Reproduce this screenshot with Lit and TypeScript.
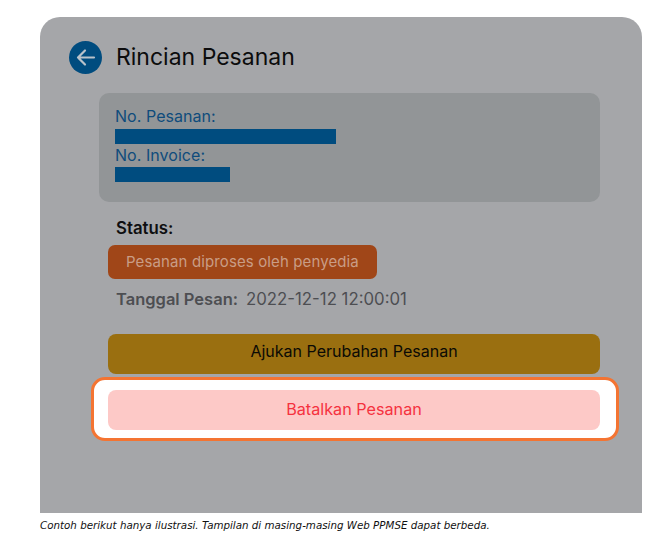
import { LitElement, html, css } from 'lit';
import { customElement } from 'lit/decorators.js';

@customElement('app-root')
export class AppRoot extends LitElement {
  static styles = css`
    :host {
      display: block;
      width: 662px;
      height: 537px;
      background: #fff;
      font-family: 'Inter', 'Liberation Sans', sans-serif;
      overflow: hidden;
    }

    .page {
      display: flex;
      flex-direction: column;
      margin: 0;
      padding: 17px 20px 0 40px;
    }

    .screen {
      display: flex;
      flex-direction: column;
      height: 496px;
      background: #a5a6a9;
      border-radius: 20px 20px 0 0;
    }

    header {
      display: flex;
      align-items: center;
      gap: 14px;
      height: 34px;
      margin-top: 23px;
      padding-left: 29px;
    }

    header svg {
      display: block;
      flex: none;
    }

    h1 {
      margin: 0;
      font-size: 23px;
      font-weight: 400;
      line-height: 28px;
      color: #0c0c0d;
    }

    .order-card {
      display: flex;
      flex-direction: column;
      box-sizing: border-box;
      width: 501px;
      height: 109px;
      margin: 19px 0 0 59px;
      padding: 13px 16px 0;
      background: #929597;
      border-radius: 10px;
    }

    .label {
      font-size: 16px;
      line-height: 20px;
      letter-spacing: 0.05px;
      color: #0f4c7c;
    }

    .bar {
      height: 15px;
      background: #004c7f;
    }

    .bar.order {
      width: 221px;
      margin: 3px 0 1px;
    }

    .bar.invoice {
      width: 115px;
      margin-top: 2px;
    }

    .details {
      display: flex;
      flex-direction: column;
      align-items: flex-start;
      padding-left: 68px;
    }

    .status-title {
      margin: 16px 0 0 8px;
      font-size: 16.8px;
      font-weight: 600;
      line-height: 20px;
      color: #0e0e10;
    }

    .status-pill {
      box-sizing: border-box;
      width: 269px;
      height: 34px;
      margin-top: 7px;
      padding-left: 18px;
      background: #a04618;
      border-radius: 7px;
      font-size: 15px;
      letter-spacing: 0.12px;
      line-height: 33px;
      color: #c99d86;
    }

    .order-date {
      display: flex;
      gap: 8px;
      margin: 10px 0 0 8px;
      font-size: 16.8px;
      line-height: 20px;
      color: #4d4e52;
    }

    .order-date b {
      font-size: 16.5px;
      font-weight: 600;
    }

    .action {
      box-sizing: border-box;
      width: 492px;
      height: 40px;
      border-radius: 8px;
      font-size: 16px;
      line-height: 35px;
      text-align: center;
    }

    .action.change {
      margin: 25px 0 3px;
      background: #9a6f10;
      color: #0b0a05;
    }

    .highlight {
      box-sizing: border-box;
      width: 528px;
      height: 64px;
      margin-left: 51px;
      padding: 10px 16px 8px 14px;
      background: #fff;
      border: 3px solid #f47432;
      border-radius: 14px;
    }

    .action.cancel {
      background: #fdc9c7;
      color: #f5323f;
      font-size: 16.2px;
      line-height: 38px;
    }

    figcaption {
      margin-top: 5px;
      font-family: 'DejaVu Sans', sans-serif;
      font-size: 10.3px;
      font-style: italic;
      line-height: 14px;
      color: #111;
    }
  `;

  render() {
    return html`<figure class="page">
      <div class="screen">
        ${this.renderHeader()}
        <section class="order-card">
          <span class="label">No. Pesanan:</span>
          <div class="bar order"></div>
          <span class="label">No. Invoice:</span>
          <div class="bar invoice"></div>
        </section>
        <section class="details">
          <div class="status-title">Status:</div>
          <div class="status-pill">Pesanan diproses oleh penyedia</div>
          <div class="order-date">
            <b>Tanggal Pesan:</b><span>2022-12-12 12:00:01</span>
          </div>
          <div class="action change">Ajukan Perubahan Pesanan</div>
        </section>
        <div class="highlight">
          <div class="action cancel">Batalkan Pesanan</div>
        </div>
      </div>
      <figcaption>
        Contoh berikut hanya ilustrasi. Tampilan di masing-masing Web PPMSE
        dapat berbeda.
      </figcaption>
    </figure>`;
  }

  private renderHeader() {
    return html`<header>
      <svg width="33" height="33" viewBox="0 0 33 33">
        <circle cx="16.5" cy="16.5" r="16.5" fill="#004c7f"></circle>
        <path
          d="M25 16.5H9M16 9.5l-7 7 7 7"
          fill="none"
          stroke="#b9c2ca"
          stroke-width="2.2"
          stroke-linecap="round"
          stroke-linejoin="round"
        ></path>
      </svg>
      <h1>Rincian Pesanan</h1>
    </header>`;
  }
}
